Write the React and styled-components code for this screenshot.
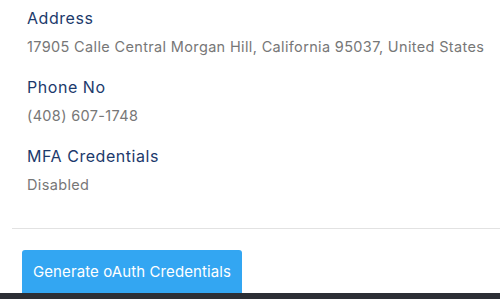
import React from 'react';
import styled, { createGlobalStyle } from 'styled-components';

const GlobalStyle = createGlobalStyle`
  html, body {
    margin: 0;
    padding: 0;
    background: #ffffff;
    font-family: Inter, "Noto Sans", sans-serif;
  }
`;

const Page = styled.div`
  width: 500px;
  height: 299px;
  overflow: hidden;
  display: flex;
  flex-direction: column;
  background: #ffffff;
`;

const Details = styled.div`
  padding: 6px 0 0 27px;
  display: flex;
  flex-direction: column;
  gap: 16px;
`;

const Field = styled.div`
  display: flex;
  flex-direction: column;
  gap: 5px;
`;

const Label = styled.div`
  font-size: 16px;
  line-height: 24px;
  font-weight: 400;
  letter-spacing: 0.55px;
  color: #1c3a6c;
`;

const Value = styled.div`
  font-size: 14.5px;
  line-height: 24px;
  letter-spacing: 0.35px;
  color: #777777;
  white-space: nowrap;
`;

const Divider = styled.hr`
  margin: 31px 0 0 12px;
  border: none;
  border-top: 1px solid #e2e2e2;
`;

const Actions = styled.div`
  flex: 1;
  display: flex;
  align-items: flex-end;
  padding-left: 22px;
`;

const Button = styled.button`
  width: 220px;
  height: 43px;
  border: none;
  border-radius: 3px 3px 0 0;
  background: #33a6f2;
  color: #ffffff;
  font-family: Inter, "Noto Sans", sans-serif;
  font-size: 15px;
  letter-spacing: 0.1px;
  padding: 0;
  cursor: pointer;
`;

const BottomBar = styled.div`
  height: 6px;
  background: #2c2f35;
`;

const fields = [
  { label: 'Address', value: '17905 Calle Central Morgan Hill, California 95037, United States' },
  { label: 'Phone No', value: '(408) 607-1748' },
  { label: 'MFA Credentials', value: 'Disabled' },
];

export default function App() {
  return (
    <Page>
      <GlobalStyle />
      <Details>
        {fields.map((f) => (
          <Field key={f.label}>
            <Label>{f.label}</Label>
            <Value>{f.value}</Value>
          </Field>
        ))}
      </Details>
      <Divider />
      <Actions>
        <Button>Generate oAuth Credentials</Button>
      </Actions>
      <BottomBar />
    </Page>
  );
}
